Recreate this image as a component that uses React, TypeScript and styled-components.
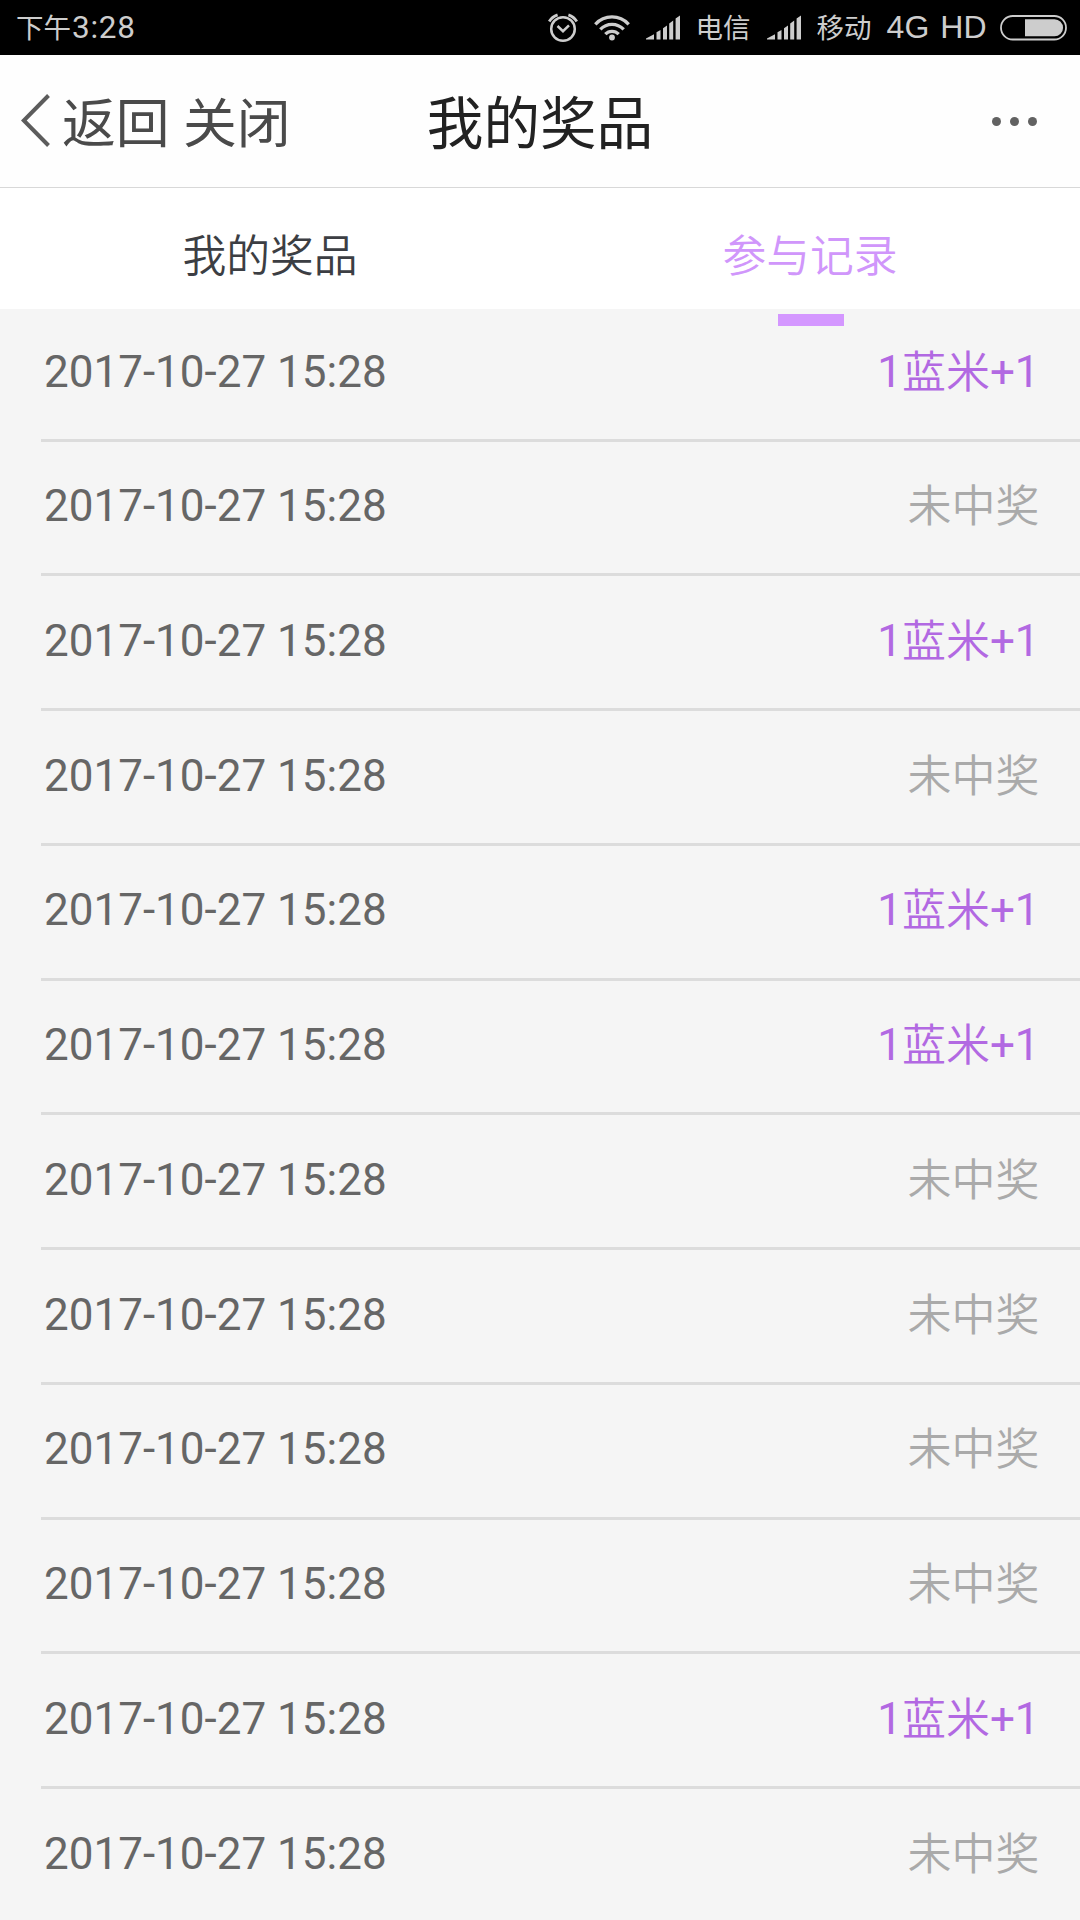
import React from "react";
import styled, { createGlobalStyle } from "styled-components";

const GlobalStyle = createGlobalStyle`
  * { box-sizing: border-box; }
  body {
    margin: 0;
    background: #f5f5f5;
    font-family: Roboto, "Noto Sans CJK SC", sans-serif;
  }
`;

const Page = styled.div`
  width: 1080px;
  height: 1920px;
  overflow: hidden;
  display: flex;
  flex-direction: column;
  background: #f5f5f5;
`;

const StatusBar = styled.div`
  flex: none;
  height: 55px;
  padding: 0 13px 0 16px;
  display: flex;
  align-items: center;
  background: #000;
  color: #cdcdcd;
  white-space: nowrap;
`;

const Clock = styled.div`
  display: flex;
  margin-right: auto;
`;

const StatusText = styled.span<{ $gap?: number }>`
  flex: none;
  height: 55px;
  font-family: "Noto Sans CJK SC", sans-serif;
  font-size: 27.5px;
  line-height: 53px;
  margin-left: ${(p) => p.$gap ?? 0}px;
`;

const ClockDigits = styled(StatusText)`
  font-family: Roboto, sans-serif;
  font-size: 31.5px;
  line-height: 56px;
  letter-spacing: 0.7px;
`;

const NetworkText = styled(StatusText)`
  font-family: "Liberation Sans", Arial, sans-serif;
  font-size: 32px;
  line-height: 54px;
`;

const StatusIcon = styled.svg<{ $gap?: number }>`
  display: block;
  flex: none;
  margin-left: ${(p) => p.$gap ?? 0}px;
`;

const Header = styled.header`
  flex: none;
  height: 133px;
  padding: 0 21px;
  display: grid;
  grid-template-columns: 1fr auto 1fr;
  align-items: center;
  background: #fefefe;
  border-bottom: 1px solid #d8d8d8;
`;

const Nav = styled.div`
  display: flex;
  align-items: center;
  color: #4a4a4a;
`;

const NavText = styled.span`
  margin-left: 11px;
  font-size: 53.8px;
  line-height: 80px;
  padding-top: 7px;
  white-space: nowrap;
`;

const Title = styled.h1`
  margin: 0;
  padding-top: 8px;
  font-size: 56.6px;
  font-weight: 400;
  line-height: 80px;
  color: #222;
`;

const More = styled.div`
  justify-self: end;
  display: flex;
  gap: 9px;
  padding-right: 22px;
`;

const Dot = styled.i`
  width: 9px;
  height: 9px;
  border-radius: 50%;
  background: #626262;
`;

const Tabs = styled.nav`
  flex: none;
  height: 121px;
  display: grid;
  grid-template-columns: 1fr 1fr;
  background: #fff;
`;

const Tab = styled.div<{ $active?: boolean }>`
  position: relative;
  text-align: center;
  font-size: 43.8px;
  font-weight: 350;
  line-height: 139px;
  color: ${(p) => (p.$active ? "#d096fb" : "#3c3e43")};

  &::after {
    content: "";
    display: ${(p) => (p.$active ? "block" : "none")};
    position: absolute;
    left: 238px;
    top: 126px;
    width: 66px;
    height: 12px;
    background: #d497ff;
  }
`;

const List = styled.div`
  padding-left: 41px;
`;

const Row = styled.div`
  height: 134.75px;
  padding: 0 40.4px 3px 3px;
  display: flex;
  align-items: center;
  justify-content: space-between;
  border-bottom: 3px solid #dcdcdc;
  font-size: 44px;
  line-height: 60px;

  &:first-child { height: 132.7px; }
`;

const Time = styled.span`
  height: 60px;
  color: #666;
`;

const Result = styled.span<{ $won: boolean }>`
  height: 60px;
  color: ${(p) => (p.$won ? "#b269e2" : "#aaa")};
`;

const Glyphs = styled.span`
  font-weight: 350;
  line-height: 1;
  vertical-align: -1px;
`;

const Signal = ({ gap }: { gap: number }) => (
  <StatusIcon $gap={gap} width="34" height="25" viewBox="0 0 34 25" fill="#cdcdcd">
    <path d="M0 24.5V23.5L8 19.3V24.5ZM10.5 24.5V17.3L14.5 15V24.5ZM17 24.5V13.3L21 10.5V24.5ZM23.2 24.5V8.5L27.2 5.5V24.5ZM29.6 24.5V3.5L34 .5V24.5Z" />
  </StatusIcon>
);

const WON = [true, false, true, false, true, true, false, false, false, false, true, false];

export default function App() {
  return (
    <>
      <GlobalStyle />
      <Page>
        <StatusBar>
          <Clock>
            <StatusText>下午</StatusText>
            <ClockDigits $gap={1}>3:28</ClockDigits>
          </Clock>
          <StatusIcon width="30" height="30" viewBox="0 0 30 30" fill="none" stroke="#cdcdcd">
            <circle cx="15" cy="16" r="11.8" strokeWidth="2.5" />
            <path d="M9.5 13l5.5 5.2 6-5.8" strokeWidth="2.5" />
            <path d="M1.2 8.5Q4 3.7 9.6 1.8M28.8 8.5Q26 3.7 20.4 1.8" strokeWidth="2.8" />
          </StatusIcon>
          <StatusIcon $gap={15.5} width="36" height="27" viewBox="0 0 36 27" fill="none" stroke="#cdcdcd" strokeWidth="3.3">
            <path d="M1.3 10.3C10.5.5 25.5.5 34.7 10.3M6.3 15.4C12.8 8.6 23.2 8.6 29.7 15.4M11.3 20.2C15 16.4 21 16.4 24.7 20.2" />
            <circle cx="18" cy="23.5" r="2.9" fill="#cdcdcd" stroke="none" />
          </StatusIcon>
          <Signal gap={16} />
          <StatusText $gap={16}>电信</StatusText>
          <Signal gap={16.5} />
          <StatusText $gap={15.5}>移动</StatusText>
          <NetworkText $gap={15}>4G</NetworkText>
          <NetworkText $gap={11}>HD</NetworkText>
          <StatusIcon $gap={13.5} width="67" height="26" viewBox="0 0 67 26">
            <rect x="1" y="1" width="65" height="23.5" rx="11.75" fill="none" stroke="#cdcdcd" strokeWidth="1.8" />
            <path d="M25 4.2H54.5A8.5 8.5 0 0 1 54.5 21.3H25Z" fill="#cdcdcd" />
          </StatusIcon>
        </StatusBar>

        <Header>
          <Nav>
            <svg width="30" height="54" viewBox="0 0 30 54" fill="none" stroke="#5c5c5c" strokeWidth="4">
              <path d="M27.5 1.5L2.8 26.5L27.5 51.5" />
            </svg>
            <NavText>返回 关闭</NavText>
          </Nav>
          <Title>我的奖品</Title>
          <More>
            <Dot />
            <Dot />
            <Dot />
          </More>
        </Header>

        <Tabs>
          <Tab>我的奖品</Tab>
          <Tab $active>参与记录</Tab>
        </Tabs>

        <List>
          {WON.map((won, i) => (
            <Row key={i}>
              <Time>2017-10-27 15:28</Time>
              <Result $won={won}>
                {won ? (
                  <>
                    1<Glyphs>蓝米</Glyphs>+1
                  </>
                ) : (
                  <Glyphs>未中奖</Glyphs>
                )}
              </Result>
            </Row>
          ))}
        </List>
      </Page>
    </>
  );
}
